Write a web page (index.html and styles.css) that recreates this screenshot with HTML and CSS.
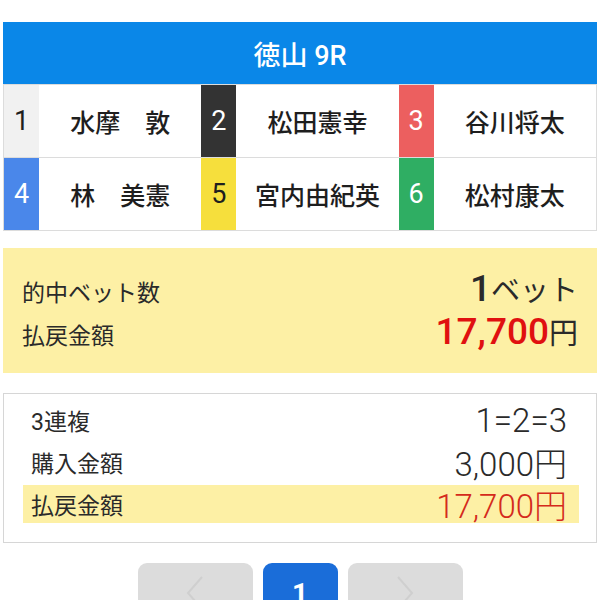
FILE: index.html
```html
<!DOCTYPE html>
<html lang="ja">
<head>
<meta charset="utf-8">
<link rel="stylesheet" href="styles.css">
</head>
<body>
<div class="page">
  <div class="race">
    <div class="race-title">徳山 9R</div>
    <div class="lanes">
      <div class="num lane1">1</div><div class="name">水摩　敦</div>
      <div class="num lane2">2</div><div class="name">松田憲幸</div>
      <div class="num lane3">3</div><div class="name">谷川将太</div>
      <div class="num lane4">4</div><div class="name">林　美憲</div>
      <div class="num lane5">5</div><div class="name">宮内由紀英</div>
      <div class="num lane6">6</div><div class="name">松村康太</div>
    </div>
  </div>

  <div class="summary">
    <div class="sum-row"><span class="sum-label">的中ベット数</span><span class="sum-value"><b class="big">1</b>ベット</span></div>
    <div class="sum-row"><span class="sum-label">払戻金額</span><span class="sum-value"><b class="big red">17,700</b>円</span></div>
  </div>

  <div class="detail">
    <div class="d-row"><span class="d-label">3連複</span><span class="d-value">1=2=3</span></div>
    <div class="d-row"><span class="d-label">購入金額</span><span class="d-value">3,000円</span></div>
    <div class="d-row hit"><span class="d-label">払戻金額</span><span class="d-value red">17,700円</span></div>
  </div>

  <div class="pager">
    <div class="pg pg-nav"><svg width="30" height="40" viewBox="0 0 30 40"><path d="M22 4 L8 20 L22 36" fill="none" stroke="#cfcfcf" stroke-width="2"/></svg></div>
    <div class="pg pg-cur">1</div>
    <div class="pg pg-nav"><svg width="30" height="40" viewBox="0 0 30 40"><path d="M8 4 L22 20 L8 36" fill="none" stroke="#cfcfcf" stroke-width="2"/></svg></div>
  </div>
</div>
</body>
</html>
```

FILE: styles.css
```css
html, body {
  margin: 0;
  padding: 0;
  background: #ffffff;
}
body {
  font-family: Roboto, "Noto Sans CJK JP", sans-serif;
  color: #222;
  overflow: hidden;
}
.page {
  padding: 22px 3px 0 3px;
}
.race {
  border: 1px solid #dcdcdc;
  border-top: none;
}
.race-title {
  height: 62px;
  background: #0a87e8;
  color: #ffffff;
  font-size: 27px;
  font-weight: 500;
  display: flex;
  align-items: center;
  justify-content: center;
  margin: 0 -1px;
}
.lanes {
  display: grid;
  grid-template-columns: 35px 1fr 35px 1fr 35px 1fr;
  grid-auto-rows: 72px;
  row-gap: 1px;
  background: #dcdcdc;
  padding-top: 1px;
}
.num, .name {
  display: flex;
  align-items: center;
  justify-content: center;
  font-size: 25px;
  font-weight: 500;
  background: #fff;
}
.num { font-size: 27px; font-weight: 400; }
.name { color: #1e1e1e; }
.lane1 { background: #f1f1f1; color: #1e1e1e; }
.lane2 { background: #333333; color: #fff; }
.lane3 { background: #ec5f5f; color: #fff; }
.lane4 { background: #4a87ea; color: #fff; }
.lane5 { background: #f6df3c; color: #1e1e1e; }
.lane6 { background: #2fae63; color: #fff; }

.summary {
  margin-top: 17px;
  background: #fdf0a5;
  padding: 19px 19px 20px 19px;
}
.sum-row {
  display: flex;
  justify-content: space-between;
  align-items: baseline;
  height: 43px;
  line-height: 43px;
}
.sum-label {
  font-size: 23px;
  color: #2a2a2a;
}
.sum-value {
  font-size: 29px;
  color: #2a2a2a;
}
.big {
  font-size: 37px;
  font-weight: 500;
}
.red { color: #e01010; }

.detail {
  margin-top: 20px;
  border: 1px solid #d6d6d6;
  padding: 5px 17px 19px 19px;
}
.d-row {
  display: flex;
  justify-content: space-between;
  align-items: center;
  height: 42px;
  padding: 0 12px 0 8px;
}
.d-row.hit {
  background: #fdf0a5;
  height: 38px;
  margin-top: 2px;
}
.d-label {
  font-size: 23px;
  color: #2a2a2a;
}
.d-value {
  font-size: 33px;
  font-weight: 300;
  color: #2a2a2a;
}
.d-value.red { color: #d42a1c; }

.pager {
  margin-top: 20px;
  display: flex;
  justify-content: center;
  gap: 10px;
}
.pg {
  height: 60px;
  border-radius: 9px;
  display: flex;
  align-items: center;
  justify-content: center;
}
.pg-nav {
  width: 115px;
  background: #dcdcdc;
}
.pg-cur {
  width: 75px;
  background: #1a6dd9;
  color: #fff;
  font-size: 28px;
  font-weight: 700;
}
```
